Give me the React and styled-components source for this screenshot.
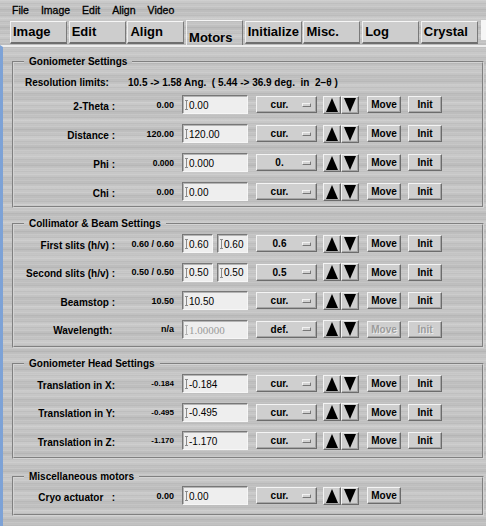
import React from "react";
import styled, { createGlobalStyle } from "styled-components";

const GlobalStyle = createGlobalStyle`
  html, body { margin: 0; padding: 0; }
  body {
    background: #c5c5c5;
    font-family: "Liberation Sans", Arial, Helvetica, sans-serif;
    color: #000;
  }
`;

// brushed metal look of the old Motif/Tk theme
const metal = `
  background-color: #c6c6c6;
  background-image:
    repeating-linear-gradient(180deg, rgba(255,255,255,0.12) 0px, rgba(255,255,255,0.12) 1px, rgba(0,0,0,0) 1px, rgba(0,0,0,0) 3px, rgba(0,0,0,0.045) 3px, rgba(0,0,0,0.045) 4px, rgba(0,0,0,0) 4px, rgba(0,0,0,0) 6px),
    repeating-linear-gradient(180deg, rgba(255,255,255,0.07) 0px, rgba(0,0,0,0) 5px, rgba(0,0,0,0.05) 11px, rgba(0,0,0,0) 17px);
`;

const raised = `
  box-sizing: border-box;
  background: #cfcfcf;
  border: 1px solid;
  border-color: #f4f4f4 #6c6c6c #6c6c6c #f4f4f4;
  box-shadow: inset -1px -1px 0 #a6a6a6;
`;

const Window = styled.div`
  width: 486px;
  height: 526px;
  overflow: hidden;
  display: flex;
  flex-direction: column;
  ${metal}
`;

const MenuBar = styled.div`
  height: 20px;
  display: flex;
  align-items: center;
  gap: 12px;
  padding-left: 12px;
  font-size: 10.5px;
  -webkit-text-stroke: 0.3px #000;
`;

const MenuItem = styled.span``;

const TabBar = styled.div`
  height: 25px;
  display: flex;
  align-items: flex-end;
  gap: 1.7px;
  padding-left: 10px;
`;

const Tab = styled.div`
  width: 57px;
  box-sizing: border-box;
  height: ${({ $active }) => ($active ? 25 : 23)}px;
  margin-bottom: ${({ $active }) => ($active ? 0 : 1)}px;
  padding-left: 2px;
  display: flex;
  align-items: ${({ $active }) => ($active ? "flex-end" : "center")};
  font-size: 13px;
  font-weight: bold;
  line-height: 15px;
  white-space: nowrap;
  overflow: hidden;
  border-top: 1px solid #f6f6f6;
  border-left: 1px solid #f0f0f0;
  border-right: 1px solid #7a7a7a;
  border-bottom: ${({ $active }) => ($active ? "none" : "2px solid #6e6e6e")};
  background: ${({ $active }) => ($active ? "transparent" : "#cdcdcd")};
  padding-bottom: ${({ $active }) => ($active ? 0 : 1)}px;
`;

const TabFiller = styled.div`
  flex: 1;
  align-self: flex-start;
  height: 20px;
  margin-left: 1px;
  background: #f6f6f6;
`;

const Panel = styled.div`
  flex: 1;
  border-left: 3px solid #7da2d6;
  border-top: 2px solid #ededed;
  padding: 0 2px 0 9px;
  display: flex;
  flex-direction: column;
`;

const Group = styled.fieldset`
  margin: ${({ $top }) => $top}px 0 0 0;
  padding: 0;
  border: 2px groove #d4d4d4;
  min-width: 0;
`;

const Legend = styled.legend`
  margin-left: 10px;
  padding: 0 5px;
  font-size: 10px;
  font-weight: bold;
  line-height: 12px;
`;

const Body = styled.div`
  display: flex;
  flex-direction: column;
  gap: ${({ $gap }) => $gap}px;
  padding: ${({ $pt }) => $pt}px 0 ${({ $pb }) => $pb}px 0;
`;

const ResRow = styled.div`
  display: flex;
  align-items: center;
  height: 14px;
  margin-bottom: -4px;
  font-size: 10px;
  font-weight: bold;
  white-space: pre;
`;

const ResLabel = styled.span`
  box-sizing: border-box;
  width: 114px;
  padding-left: 11px;
`;

const Row = styled.div`
  display: flex;
  align-items: center;
  height: 19px;
`;

const Label = styled.span`
  width: 101px;
  padding-top: 4px;
  text-align: right;
  font-size: 10px;
  font-weight: bold;
  line-height: 12px;
  white-space: pre;
`;

const Current = styled.span`
  width: 59px;
  padding-right: 1px;
  margin-right: 7px;
  text-align: right;
  font-size: ${({ $size }) => $size || 9}px;
  font-weight: bold;
  white-space: pre;
`;

const Fields = styled.div`
  display: flex;
  gap: 4px;
  width: 66px;
`;

const Field = styled.div`
  flex: 1;
  height: 19px;
  box-sizing: border-box;
  display: flex;
  align-items: center;
  padding: 1px 0 0 2px;
  background: #eeeeee;
  border: 1px solid;
  border-color: #777 #f6f6f6 #f6f6f6 #777;
  box-shadow: inset 1px 1px 0 #b4b4b4;
  font-size: ${({ $disabled }) => ($disabled ? 11 : 10)}px;
  font-family: ${({ $disabled }) => ($disabled ? '"Liberation Serif", "Times New Roman", serif' : "inherit")};
  color: ${({ $disabled }) => ($disabled ? "#9a9a9a" : "#000")};
`;

const Caret = styled.span`
  display: inline-block;
  width: 3px;
  height: 10px;
  margin-right: 1px;
  box-sizing: border-box;
  border-top: 1px solid ${({ $disabled }) => ($disabled ? "#b4b4b4" : "#8a8a8a")};
  border-bottom: 1px solid ${({ $disabled }) => ($disabled ? "#b4b4b4" : "#8a8a8a")};
  background: linear-gradient(${({ $disabled }) => ($disabled ? "#b4b4b4, #b4b4b4" : "#8a8a8a, #8a8a8a")}) center / 1px 100% no-repeat;
`;

const OptionMenu = styled.div`
  ${raised}
  width: 61px;
  height: 17px;
  margin-left: 8px;
  display: flex;
  align-items: center;
  padding-right: 5px;
  font-size: 10px;
  font-weight: bold;
`;

const OptionText = styled.span`
  flex: 1;
  text-align: center;
`;

const Indicator = styled.span`
  width: 9px;
  height: 4px;
  box-sizing: border-box;
  border: 1px solid;
  border-color: #f2f2f2 #777 #777 #f2f2f2;
  background: #d2d2d2;
`;

const Arrows = styled.div`
  display: flex;
  margin-left: 6px;
`;

const ArrowButton = styled.div`
  ${raised}
  width: 18px;
  height: 18px;
  display: flex;
  align-items: center;
  justify-content: center;
`;

const PushButton = styled.div`
  ${raised}
  width: 34px;
  height: 17px;
  margin-left: ${({ $gap }) => $gap}px;
  display: flex;
  align-items: center;
  justify-content: center;
  font-size: 10px;
  font-weight: bold;
  color: ${({ $disabled }) => ($disabled ? "#9c9c9c" : "#000")};
  text-shadow: ${({ $disabled }) => ($disabled ? "1px 1px 0 #ececec" : "none")};
`;

const Triangle = ({ down }) => (
  <svg width="12" height="14" viewBox="0 0 12 14">
    <polygon points={down ? "0,0 12,0 6,14" : "6,0 12,14 0,14"} fill="#000" />
  </svg>
);

const gonio = [
  { label: "2-Theta :", cur: "0.00", fields: ["0.00"], opt: "cur." },
  { label: "Distance :", cur: "120.00", fields: ["120.00"], opt: "cur." },
  { label: "Phi :", cur: "0.000", size: 8.5, fields: ["0.000"], opt: "0." },
  { label: "Chi :", cur: "0.00", fields: ["0.00"], opt: "cur." },
];

const collimator = [
  { label: "First slits (h/v) :", cur: "0.60 / 0.60", fields: ["0.60", "0.60"], opt: "0.6" },
  { label: "Second slits (h/v) :", cur: "0.50 / 0.50", fields: ["0.50", "0.50"], opt: "0.5" },
  { label: "Beamstop :", cur: "10.50", fields: ["10.50"], opt: "cur." },
  { label: "Wavelength: ", cur: "n/a", fields: ["1.00000"], opt: "def.", disabled: true },
];

const head = [
  { label: "Translation in X:", cur: "-0.184", size: 8, fields: ["-0.184"], opt: "cur." },
  { label: "Translation in Y:", cur: "-0.495", size: 8, fields: ["-0.495"], opt: "cur." },
  { label: "Translation in Z:", cur: "-1.170", size: 8, fields: ["-1.170"], opt: "cur." },
];

const misc = [
  { label: "Cryo actuator   :", cur: "0.00", fields: ["0.00"], opt: "cur.", noInit: true },
];

function MotorRow({ m }) {
  return (
    <Row>
      <Label>{m.label}</Label>
      <Current $size={m.size}>{m.cur}</Current>
      <Fields>
        {m.fields.map((f, i) => (
          <Field key={i} $disabled={m.disabled}>
            <Caret $disabled={m.disabled} />
            {f}
          </Field>
        ))}
      </Fields>
      <OptionMenu>
        <OptionText>{m.opt}</OptionText>
        <Indicator />
      </OptionMenu>
      <Arrows>
        <ArrowButton><Triangle /></ArrowButton>
        <ArrowButton><Triangle down /></ArrowButton>
      </Arrows>
      <PushButton $gap={8} $disabled={m.disabled}>Move</PushButton>
      {!m.noInit && <PushButton $gap={7} $disabled={m.disabled}>Init</PushButton>}
    </Row>
  );
}

const tabs = ["Image", "Edit", "Align", "Motors", "Initialize", "Misc.", "Log", "Crystal"];

export default function App() {
  return (
    <Window>
      <GlobalStyle />
      <MenuBar>
        {["File", "Image", "Edit", "Align", "Video"].map((m) => (
          <MenuItem key={m}>{m}</MenuItem>
        ))}
      </MenuBar>
      <TabBar>
        {tabs.map((t) => (
          <Tab key={t} $active={t === "Motors"}>{t}</Tab>
        ))}
        <TabFiller />
      </TabBar>
      <Panel>
        <Group $top={9}>
          <Legend>Goniometer Settings</Legend>
          <Body $gap={10} $pt={7} $pb={5}>
            <ResRow>
              <ResLabel>Resolution limits:</ResLabel>
              <span>10.5 -&gt; 1.58 Ang.  ( 5.44 -&gt; 36.9 deg.  in  2−θ )</span>
            </ResRow>
            {gonio.map((m) => <MotorRow key={m.label} m={m} />)}
          </Body>
        </Group>
        <Group $top={10}>
          <Legend>Collimator &amp; Beam Settings</Legend>
          <Body $gap={9.5} $pt={4} $pb={7.5}>
            {collimator.map((m) => <MotorRow key={m.label} m={m} />)}
          </Body>
        </Group>
        <Group $top={10}>
          <Legend>Goniometer Head Settings</Legend>
          <Body $gap={9.5} $pt={4} $pb={7}>
            {head.map((m) => <MotorRow key={m.label} m={m} />)}
          </Body>
        </Group>
        <Group $top={12}>
          <Legend>Miscellaneous motors</Legend>
          <Body $gap={9} $pt={3} $pb={9}>
            {misc.map((m) => <MotorRow key={m.label} m={m} />)}
          </Body>
        </Group>
      </Panel>
    </Window>
  );
}
